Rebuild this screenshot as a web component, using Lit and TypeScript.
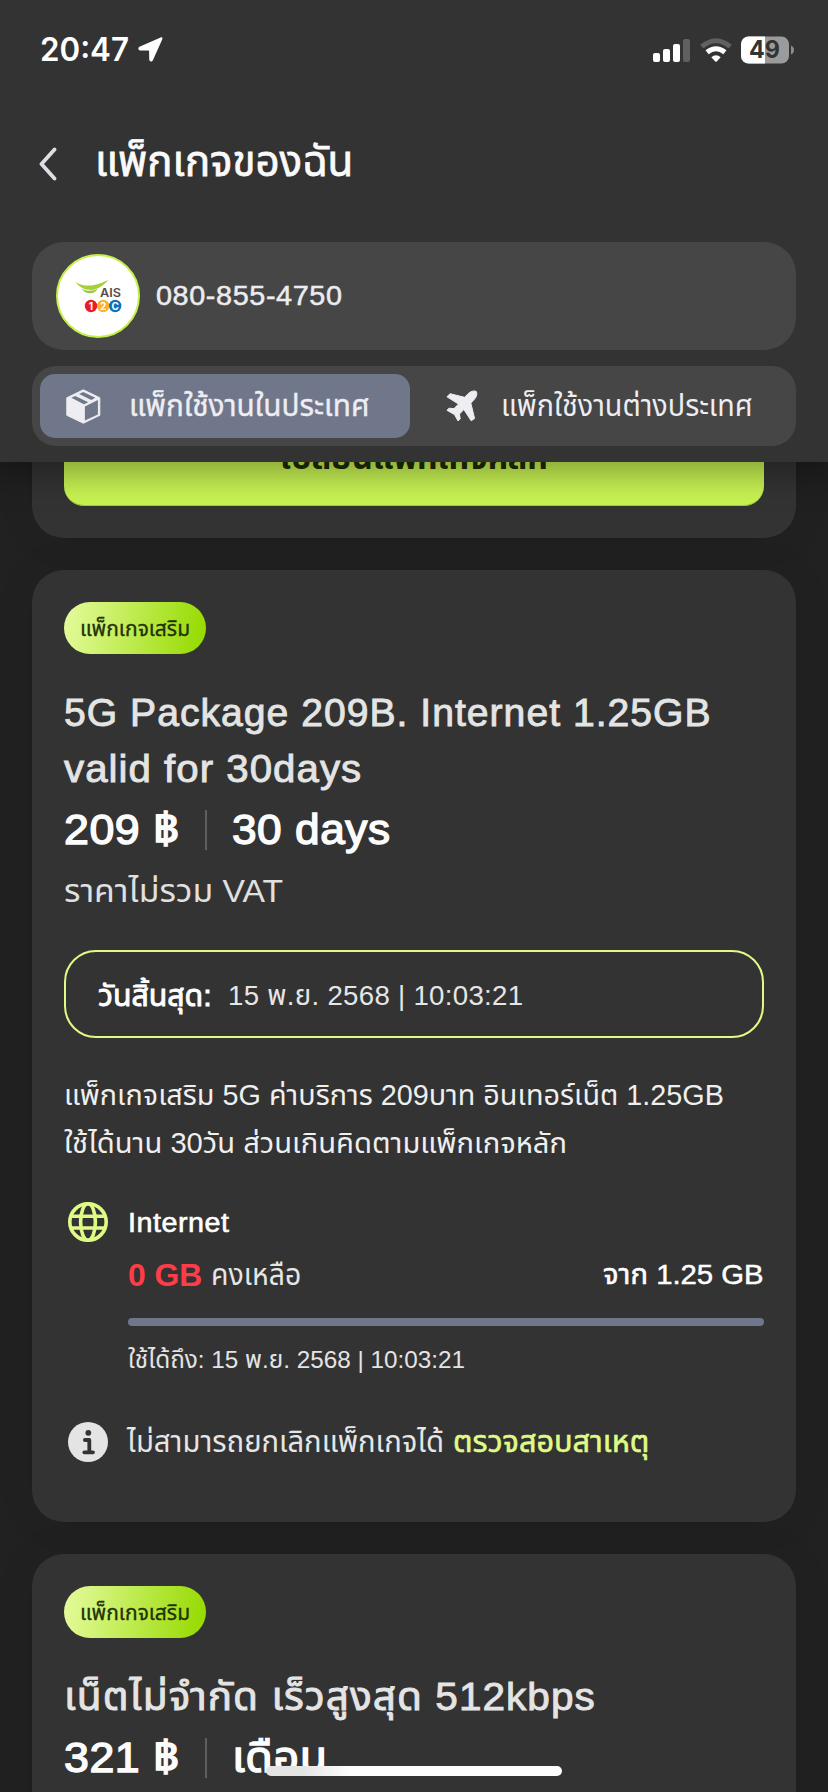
import { LitElement, html, css, svg } from "lit";
import { customElement, property, query, state } from "lit/decorators.js";
import { styleMap } from "lit/directives/style-map.js";

/** One line of text, condensed or widened horizontally to fill a given width. */
@customElement("fit-text")
class FitText extends LitElement {
  @property({ type: Number }) width = 100;
  @property() text = "";
  @state() private ratio = 1;
  @query(".line") private line!: HTMLElement;

  static styles = css`
    :host { display: block; flex: none; white-space: pre; }
    .box { display: block; }
    .line { display: inline-block; transform-origin: 0 50%; vertical-align: top; }
  `;

  firstUpdated() {
    const natural = this.line.offsetWidth;
    if (natural > 0) this.ratio = this.width / natural;
  }

  render() {
    return html`<span class="box" style=${styleMap({ width: `${this.width}px` })}
      ><span class="line" style=${styleMap({ transform: `scaleX(${this.ratio})` })}>${this.text}</span></span>`;
  }
}

const t = (cls: string, width: number, text: string) =>
  html`<fit-text class=${cls} .width=${width} .text=${text}></fit-text>`;

@customElement("app-root")
class AppRoot extends LitElement {
  static styles = css`
    :host {
      display: flex; flex-direction: column; width: 828px; height: 1792px; overflow: hidden;
      position: relative; background: #212121; color: #e6e6e6;
      font-family: "Liberation Sans", "Noto Sans Thai", sans-serif;
    }
    svg { display: block; flex: none; }
    .header { flex: none; height: 462px; background: #333; position: relative; z-index: 2; box-shadow: 0 4px 32px 8px rgba(0,0,0,.34); }
    .status { height: 99px; display: flex; align-items: center; padding: 0 33px 0 40px; }
    .clock { font: 600 32px/40px Inter, sans-serif; color: #fff; margin-right: 9px; }
    .right { margin-left: auto; display: flex; align-items: center; gap: 9px; }
    .nav { height: 130px; display: flex; align-items: center; padding-left: 39px; }
    .title { font-size: 43px; line-height: 60px; color: #fafafa; margin: 0 0 6px 38px; -webkit-text-stroke: .8px; }
    .line-card { margin: 13px 32px 0; height: 108px; border-radius: 32px; background: #464646; display: flex; align-items: center; padding-left: 24px; box-sizing: border-box; }
    .avatar { width: 84px; height: 84px; box-sizing: border-box; border-radius: 50%; background: #fff; border: 2px solid #c4f04a; }
    .phone { font-size: 28px; line-height: 40px; color: #ececf0; margin-left: 16px; letter-spacing: .6px; -webkit-text-stroke: .5px; }
    .tabs { margin: 16px 32px 0; height: 80px; padding: 8px; box-sizing: border-box; border-radius: 24px; background: #464646; display: flex; }
    .tab { display: flex; align-items: center; width: 370px; height: 64px; border-radius: 15px; padding-left: 26px; box-sizing: border-box; color: #ededf2; }
    .tab.on { background: #71778a; }
    .tab-text { font-size: 31px; line-height: 44px; margin-left: 28px; }
    .tab.off { padding-left: 36px; }
    .tab.off .tab-text { margin-left: 23px; }
    .tab.on .tab-text { -webkit-text-stroke: .4px; }

    .list { flex: 1; min-height: 0; overflow: hidden; display: flex; flex-direction: column; gap: 32px; padding: 0 32px; }
    .card { flex: none; background: #333; border-radius: 32px; padding: 32px 32px 60px; box-shadow: 0 0 40px rgba(0,0,0,.08); }
    .card.first { margin-top: -52px; padding: 0 32px 31.5px; }
    .cta { height: 96px; box-sizing: border-box; border-radius: 20px; background: #c8f352; border-bottom: 1px solid #a3c840; display: flex; align-items: center; justify-content: center; }
    .cta-text { font-size: 32px; line-height: 48px; font-weight: 700; color: #1e2b04; }
    .badge { width: 142px; height: 52px; border-radius: 26px; background: linear-gradient(100deg, #e2fa96 5%, #98db04 95%); display: flex; align-items: center; padding-left: 16px; box-sizing: border-box; }
    .badge-text { font-size: 22px; line-height: 30px; color: #1e3205; margin-top: 2px; -webkit-text-stroke: .3px; }
    .names { margin-top: 31px; }
    .name { font-size: 39px; line-height: 56px; color: #e4e4e4; letter-spacing: 1px; -webkit-text-stroke: .9px; }
    .price { margin-top: 3px; display: flex; align-items: center; height: 60px; color: #fcfcfc; }
    .money { font-size: 42px; line-height: 60px; letter-spacing: .5px; -webkit-text-stroke: 1.4px; }
    .rule { width: 2px; height: 40px; background: #5e5e5e; margin: 0 25px; }
    .vat { font-size: 32px; line-height: 48px; margin-top: 7.5px; color: #e0e0e0; }
    .expiry { margin-top: 35px; height: 87.5px; box-sizing: border-box; border: 2px solid #e0fb85; border-radius: 32px; display: flex; align-items: center; padding: 4px 0 0 32px; }
    .exp-label { font-size: 30px; line-height: 40px; color: #fff; -webkit-text-stroke: .9px; margin-right: 16px; }
    .exp-value { font-size: 28px; line-height: 40px; letter-spacing: .3px; padding-top: 1px; }
    .desc { margin-top: 33px; }
    .desc-line { font-size: 29px; line-height: 48px; color: #efefef; }
    .service { margin-top: 35px; height: 40px; display: flex; align-items: center; padding-left: 4px; gap: 20px; }
    .service-name { font-size: 27px; line-height: 40px; color: #fff; padding-top: 2px; letter-spacing: .5px; -webkit-text-stroke: .6px; }
    .usage { margin: 9px 0 0 64px; height: 48px; display: flex; align-items: center; justify-content: space-between; }
    .left { display: flex; align-items: center; gap: 9px; }
    .zero { font-size: 31px; line-height: 48px; font-weight: 700; color: #ff3c48; padding-top: 2px; }
    .remain { font-size: 30px; line-height: 48px; }
    .quota { font-size: 28px; line-height: 48px; color: #fff; -webkit-text-stroke: .5px; }
    .meter { margin: 19px 0 0 64px; height: 8.5px; border-radius: 4px; background: #71778a; }
    .until { margin: 15.5px 0 0 64px; font-size: 24.5px; line-height: 36px; color: #e4e4e4; }
    .info { margin-top: 44px; height: 40px; display: flex; align-items: center; padding-left: 4px; }
    .info-text { font-size: 31px; line-height: 40px; margin-left: 18px; }
    .link { font-size: 31px; line-height: 40px; margin-left: 9px; color: #e0fb85; -webkit-text-stroke: .6px; }
    .home { position: absolute; z-index: 3; left: 266px; top: 1766px; width: 296px; height: 10px; border-radius: 5px; background: linear-gradient(90deg, #e4e4e4 12%, #fdfdfd 28%); }
  `;

  private clockArrow = html`<svg width="25" height="25" viewBox="0 0 25 25">
    <path fill="#fff" d="M22.6.5 1.5 9.8C-.3 10.6 0 13.3 2.2 13.4l8.3.1c.4 0 .6.2.6.6l.1 8.2c0 2.4 2.7 2.9 3.7.9L24.3 2.3C24.900.9 23.9 0 22.6.5Z"/></svg>`;

  private signal = html`<svg width="38" height="24" viewBox="0 0 38 24">
    <g fill="#fff"><rect x="0" y="15" width="7" height="9" rx="2"/><rect x="10" y="11" width="7" height="13" rx="2"/><rect x="20" y="6" width="7" height="18" rx="2"/></g>
    <rect x="30" y="1" width="7" height="23" rx="2" fill="#606060"/></svg>`;

  private wifi = html`<svg width="32" height="24" viewBox="0 0 32 24">
    <g fill="none" stroke-width="5"><path stroke="#606060" d="M1.800 8.700Q16-3.200 30.200 8.700"/><path stroke="#fff" d="M7.100 14.300Q16 7.200 24.900 14.300"/></g>
    <path fill="#fff" d="M11.300 19.200Q16 15.400 20.700 19.200L16.700 23.400Q16 24 15.300 23.400Z"/></svg>`;

  private battery = html`<svg width="54" height="28" viewBox="0 0 54 28">
    <defs><clipPath id="cell"><rect x="0" y=".5" width="48" height="27" rx="7.500"/></clipPath></defs>
    <g clip-path="url(#cell)"><rect width="48" height="28" fill="#9b9b9b"/><rect width="24" height="28" fill="#fff"/></g>
    <path fill="#8d8d8d" d="M50 9.500Q53 11 53 14T50 18.500Z"/>
    <text x="23.500" y="22.300" text-anchor="middle" font-family="Inter" font-weight="700" font-size="24" textLength="31" lengthAdjust="spacingAndGlyphs" fill="#333">49</text></svg>`;

  private logo = html`<svg width="80" height="80" viewBox="2 2 80 80">
    <path fill="#a9cf38" d="M19.500 28C25 31.800 31 32 37 31.300 43 30.500 48 27.500 52.500 26 48 31 42 35.500 35 36 28 36 23 32.500 19.500 28Z"/>
    <path fill="#95c93d" d="M25 34.400C30 37.500 37 37.300 42 34.800 39.500 38 37 39.400 34 39.300 30 39.200 27.500 37 25 34.400Z"/>
    <text x="44" y="42.500" font-family="Inter" font-weight="600" font-size="12" textLength="21" lengthAdjust="spacingAndGlyphs" fill="#5b4a47">AIS</text>
    <circle cx="35" cy="52" r="6.200" fill="#ed1c24"/><circle cx="47.200" cy="52" r="6.200" fill="#fdb02c"/><circle cx="59.200" cy="52" r="6.200" fill="#0b72bd"/>
    <g font-family="Inter" font-weight="700" font-size="10" fill="#fff" text-anchor="middle"><text x="35" y="55.600">1</text><text x="47.200" y="55.600">2</text><text x="59.200" y="55.600">C</text></g></svg>`;

  private box = html`<svg width="35" height="35" viewBox="0 0 35 35">
    <path fill="#ededf2" stroke="#ededf2" stroke-width="1" stroke-linejoin="round" d="M17.300.8 33.800 8.800V26.300L17.300 34.200.8 26.300V8.800Z"/>
    <path fill="#71778a" d="M5.400 8.800 9.200 7 22.300 13.200 17.900 15.200ZM13.100 5 17.300 3 29.300 8.800 25.300 10.900ZM18.900 17.400 31.900 11V25.400L18.900 31.600Z"/></svg>`;

  private plane = html`<svg width="32" height="32" viewBox="0 0 32 32">
    <path fill="#ededf2" stroke="#ededf2" stroke-width="1" stroke-linejoin="round" d="M22.300 3.500C25 1 28.500.4 30.300 1.500 31.500 3.500 30.700 6.900 28.200 9.500L24.800 13.100 28.600 28.500 25.200 30.800 17.900 19.500 13.500 24 14.200 28.900 12 30.900 8.500 24.600 1 20.300 3 18.200 8 18.600 12.500 14.100 1 6.800 4 3.700 18.600 7.300Z"/></svg>`;

  private globe = svg`<g fill="none" stroke="#e0fb85" stroke-width="3.600"><circle cx="20" cy="20" r="18.200"/><ellipse cx="20" cy="20" rx="7.400" ry="18.200"/><path d="M3 14.200H37M3 26H37"/></g>`;

  private badge() {
    return html`<div class="badge">${t("badge-text", 110, "แพ็กเกจเสริม")}</div>`;
  }

  render() {
    return html`
      <div class="header">
        <div class="status">
          ${t("clock", 89, "20:47")}${this.clockArrow}
          <div class="right">${this.signal}${this.wifi}${this.battery}</div>
        </div>
        <div class="nav">
          <svg width="18" height="34" viewBox="0 0 18 34"><path d="M15.500 2.500 2.500 17 15.500 31.500" fill="none" stroke="#dedee4" stroke-width="3.800" stroke-linecap="round" stroke-linejoin="round"/></svg>
          ${t("title", 258, "แพ็กเกจของฉัน")}
        </div>
        <div class="line-card"><div class="avatar">${this.logo}</div>${t("phone", 187, "080-855-4750")}</div>
        <div class="tabs">
          <div class="tab on">${this.box}${t("tab-text", 241, "แพ็กใช้งานในประเทศ")}</div>
          <div class="tab off">${this.plane}${t("tab-text", 252, "แพ็กใช้งานต่างประเทศ")}</div>
        </div>
      </div>
      <div class="list">
        <div class="card first"><div class="cta">${t("cta-text", 268, "เปลี่ยนแพ็กเกจหลัก")}</div></div>
        <div class="card">
          ${this.badge()}
          <div class="names">${t("name", 648, "5G Package 209B. Internet 1.25GB")}${t("name", 298, "valid for 30days")}</div>
          <div class="price">${t("money", 116, "209 ฿")}<div class="rule"></div>${t("money", 159, "30 days")}</div>
          ${t("vat", 219, "ราคาไม่รวม VAT")}
          <div class="expiry">${t("exp-label", 114, "วันสิ้นสุด:")}${t("exp-value", 295, "15 พ.ย. 2568 | 10:03:21")}</div>
          <div class="desc">
            ${t("desc-line", 660, "แพ็กเกจเสริม 5G ค่าบริการ 209บาท อินเทอร์เน็ต 1.25GB")}
            ${t("desc-line", 503, "ใช้ได้นาน 30วัน ส่วนเกินคิดตามแพ็กเกจหลัก")}
          </div>
          <div class="service"><svg width="40" height="40" viewBox="0 0 40 40">${this.globe}</svg>${t("service-name", 102, "Internet")}</div>
          <div class="usage">
            <div class="left">${t("zero", 74, "0 GB")}${t("remain", 90, "คงเหลือ")}</div>
            ${t("quota", 161, "จาก 1.25 GB")}
          </div>
          <div class="meter"></div>
          ${t("until", 337, "ใช้ได้ถึง: 15 พ.ย. 2568 | 10:03:21")}
          <div class="info">
            <svg width="41" height="40" viewBox="0 0 41 40"><circle cx="20" cy="20" r="20" fill="#e4e4e4"/><circle cx="20.300" cy="10.800" r="2.900" fill="#333"/><path d="M16.900 18H21.300V30M16.300 30.300H25" fill="none" stroke="#333" stroke-width="3.800" stroke-linecap="round" stroke-linejoin="round"/></svg>
            ${t("info-text", 317, "ไม่สามารถยกเลิกแพ็กเกจได้")}${t("link", 196, "ตรวจสอบสาเหตุ")}
          </div>
        </div>
        <div class="card">
          ${this.badge()}
          <div class="names">${t("name", 532, "เน็ตไม่จำกัด เร็วสูงสุด 512kbps")}</div>
          <div class="price">${t("money", 116, "321 ฿")}<div class="rule"></div>${t("money", 96, "เดือน")}</div>
        </div>
      </div>
      <div class="home"></div>
    `;
  }
}
